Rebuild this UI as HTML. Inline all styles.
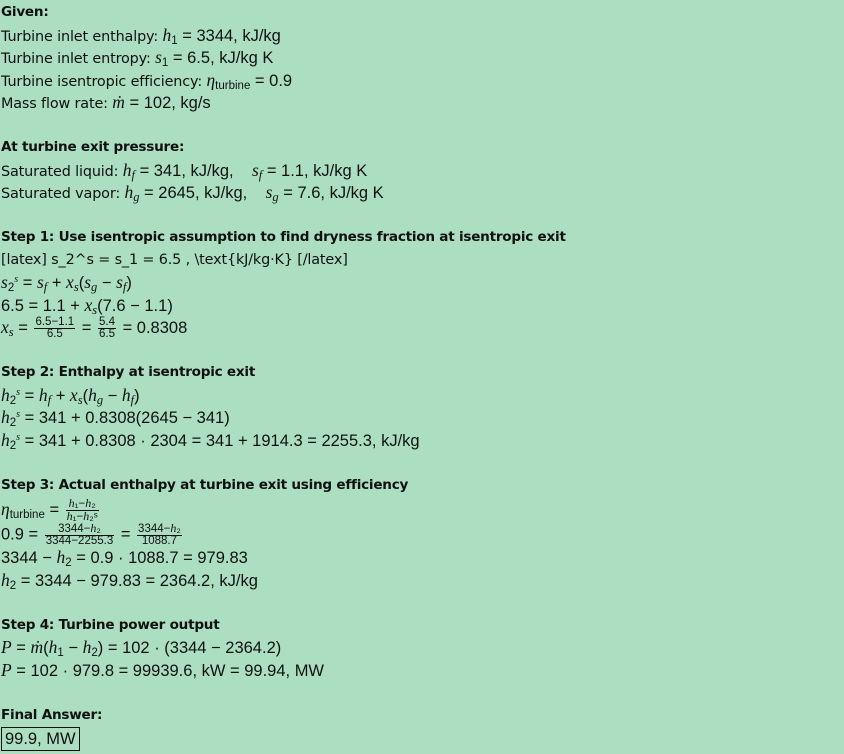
<!DOCTYPE html>
<html><head><meta charset="utf-8"><style>
body{margin:0;width:844px;height:754px;background:#acdfc2;overflow:hidden;font-family:"DejaVu Sans","Liberation Sans",sans-serif;color:#111;}
.l{position:absolute;left:1px;height:22px;line-height:22px;white-space:nowrap;font-size:14.4px;letter-spacing:-0.15px}
.b{font-weight:bold;font-size:13.6px;letter-spacing:-0.25px}
.m{font-family:"Liberation Sans",sans-serif;font-size:16.5px;letter-spacing:0}
i{font-family:"Liberation Serif",serif;font-size:17.5px}
sub{font-size:11.5px;vertical-align:-3px;line-height:0;font-style:normal;font-family:"Liberation Sans",sans-serif}
i sub{font-style:italic;font-family:"Liberation Serif",serif;font-size:12.5px}
sup{font-size:10px;vertical-align:6px;line-height:0}
.f{display:inline-block;vertical-align:middle;text-align:center;font-size:11.5px;line-height:11px;margin:0 2px}
.f span{display:block;padding:0 1px}
.f span:first-child{border-bottom:1px solid #111}
.f i{font-size:12px}
.box{border:1.2px solid #111;padding:0 3px;display:inline-block;line-height:22px}
</style></head><body>
<div class="l b" style="top:1px">Given:</div>
<div class="l" style="top:24px">Turbine inlet enthalpy: <span class="m"><i>h</i><sub>1</sub> = 3344, kJ/kg</span></div>
<div class="l" style="top:46px">Turbine inlet entropy: <span class="m"><i>s</i><sub>1</sub> = 6.5, kJ/kg K</span></div>
<div class="l" style="top:69px">Turbine isentropic efficiency: <span class="m"><i>η</i><sub>turbine</sub> = 0.9</span></div>
<div class="l" style="top:91px">Mass flow rate: <span class="m"><i>ṁ</i> = 102, kg/s</span></div>
<div class="l b" style="top:136px">At turbine exit pressure:</div>
<div class="l" style="top:159px">Saturated liquid: <span class="m"><i>h<sub>f</sub></i> = 341, kJ/kg, &nbsp;&nbsp; <i>s<sub>f</sub></i> = 1.1, kJ/kg K</span></div>
<div class="l" style="top:181px">Saturated vapor: <span class="m"><i>h<sub>g</sub></i> = 2645, kJ/kg, &nbsp;&nbsp; <i>s<sub>g</sub></i> = 7.6, kJ/kg K</span></div>
<div class="l b" style="top:226px">Step 1: Use isentropic assumption to find dryness fraction at isentropic exit</div>
<div class="l" style="top:249px">[latex] s_2^s = s_1 = 6.5 , \text{kJ/kg·K} [/latex]</div>
<div class="l m" style="top:271px"><i>s</i><sub>2</sub><sup><i style="font-size:10px">s</i></sup> = <i>s<sub>f</sub></i> + <i>x<sub>s</sub></i>(<i>s<sub>g</sub></i> − <i>s<sub>f</sub></i>)</div>
<div class="l m" style="top:294px">6.5 = 1.1 + <i>x<sub>s</sub></i>(7.6 − 1.1)</div>
<div class="l m" style="top:316px"><i>x<sub>s</sub></i> = <span class="f"><span>6.5−1.1</span><span>6.5</span></span> = <span class="f"><span>5.4</span><span>6.5</span></span> = 0.8308</div>
<div class="l b" style="top:361px">Step 2: Enthalpy at isentropic exit</div>
<div class="l m" style="top:384px"><i>h</i><sub>2</sub><sup><i style="font-size:10px">s</i></sup> = <i>h<sub>f</sub></i> + <i>x<sub>s</sub></i>(<i>h<sub>g</sub></i> − <i>h<sub>f</sub></i>)</div>
<div class="l m" style="top:406px"><i>h</i><sub>2</sub><sup><i style="font-size:10px">s</i></sup> = 341 + 0.8308(2645 − 341)</div>
<div class="l m" style="top:429px"><i>h</i><sub>2</sub><sup><i style="font-size:10px">s</i></sup> = 341 + 0.8308 · 2304 = 341 + 1914.3 = 2255.3, kJ/kg</div>
<div class="l b" style="top:474px">Step 3: Actual enthalpy at turbine exit using efficiency</div>
<div class="l m" style="top:498px"><i>η</i><sub>turbine</sub> = <span class="f"><span><i>h</i>₁−<i>h</i>₂</span><span><i>h</i>₁−<i>h</i>₂ˢ</span></span></div>
<div class="l m" style="top:523px">0.9 = <span class="f"><span>3344−<i>h</i>₂</span><span>3344−2255.3</span></span> = <span class="f"><span>3344−<i>h</i>₂</span><span>1088.7</span></span></div>
<div class="l m" style="top:546px">3344 − <i>h</i><sub>2</sub> = 0.9 · 1088.7 = 979.83</div>
<div class="l m" style="top:569px"><i>h</i><sub>2</sub> = 3344 − 979.83 = 2364.2, kJ/kg</div>
<div class="l b" style="top:614px">Step 4: Turbine power output</div>
<div class="l m" style="top:636px"><i>P</i> = <i>ṁ</i>(<i>h</i><sub>1</sub> − <i>h</i><sub>2</sub>) = 102 · (3344 − 2364.2)</div>
<div class="l m" style="top:659px"><i>P</i> = 102 · 979.8 = 99939.6, kW = 99.94, MW</div>
<div class="l b" style="top:704px">Final Answer:</div>
<div class="l m" style="top:726px;height:26px;line-height:26px"><span class="box">99.9, MW</span></div>
</body></html>
